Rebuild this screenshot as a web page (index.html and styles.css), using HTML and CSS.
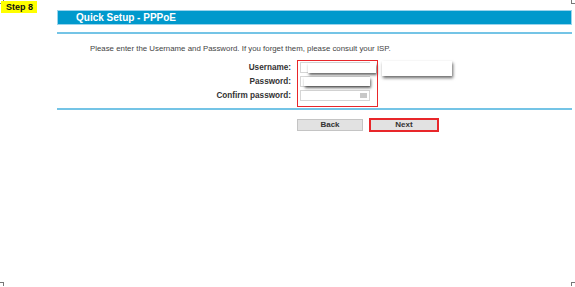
FILE: index.html
```html
<!DOCTYPE html>
<html>
<head>
<meta charset="utf-8">
<link rel="stylesheet" href="styles.css">
</head>
<body>
<div class="page">
  <span class="corner tl"></span>
  <span class="corner tr"></span>
  <span class="corner bl"></span>
  <span class="corner br"></span>
  <div class="step">Step 8</div>
  <div class="main">
    <div class="header">Quick Setup - PPPoE</div>
    <div class="rule"></div>
    <p class="intro">Please enter the Username and Password. If you forget them, please consult your ISP.</p>
    <div class="form">
      <div class="row">
        <label class="lbl">Username:</label>
        <div class="field"><span class="input"></span></div>
      </div>
      <div class="row">
        <label class="lbl">Password:</label>
        <div class="field"><span class="input"></span></div>
      </div>
      <div class="row">
        <label class="lbl">Confirm password:</label>
        <div class="field"><span class="input"><span class="key"></span></span></div>
      </div>
      <span class="mask m1"></span>
      <span class="mask m2"></span>
      <span class="mask m3"></span>
      <span class="highlight"></span>
    </div>
    <div class="rule rule2"></div>
    <div class="buttons">
      <button class="btn">Back</button>
      <button class="btn next">Next</button>
    </div>
  </div>
</div>
</body>
</html>
```
FILE: styles.css
```css
html, body {
  margin: 0;
  padding: 0;
  background: #fff;
}
.page {
  position: relative;
  width: 575px;
  height: 287px;
  overflow: hidden;
  font-family: "Liberation Sans", Arial, sans-serif;
  color: #333;
}
.corner {
  position: absolute;
  width: 3px;
  height: 3px;
  border-color: #777;
  border-style: solid;
  border-width: 0;
}
.corner.tl { left: 0; top: 0; border-right-width: 1px; border-bottom-width: 1px; }
.corner.tr { right: 0; top: 0; border-left-width: 1px; border-bottom-width: 1px; }
.corner.bl { left: 0; bottom: 1px; border-right-width: 1px; border-top-width: 1px; }
.corner.br { right: 0; bottom: 1px; border-left-width: 1px; border-top-width: 1px; }
.step {
  position: absolute;
  left: 1px;
  top: 1px;
  width: 36px;
  height: 12px;
  background: #ffff00;
  font-size: 9px;
  font-weight: bold;
  line-height: 12px;
  padding-left: 5px;
  box-sizing: border-box;
  color: #111;
}
.main {
  margin-left: 57px;
  padding-top: 10px;
  width: 515px;
}
.header {
  height: 13px;
  background: #0099cc;
  border: 1px solid #9ad4ec;
  color: #fff;
  font-weight: bold;
  font-size: 10px;
  line-height: 13px;
  padding-left: 18px;
}
.rule {
  margin-top: 7px;
  height: 2px;
  background: #74c4e6;
}
.intro {
  margin: 10px 0 0 33px;
  font-size: 7.85px;
  line-height: 10px;
  color: #444;
}
.form {
  position: relative;
  margin-top: 8px;
  display: flex;
  flex-direction: column;
  gap: 3px;
}
.row {
  display: flex;
  align-items: center;
  height: 11px;
}
.lbl {
  width: 234px;
  text-align: right;
  font-size: 8.2px;
  font-weight: bold;
  color: #333;
}
.field {
  display: flex;
  margin-left: 9px;
}
.input {
  position: relative;
  width: 70px;
  height: 11px;
  border: 1px solid #d6d6d6;
  background: #fff;
  box-sizing: border-box;
}
.key {
  position: absolute;
  right: 2px;
  top: 2px;
  width: 7px;
  height: 5px;
  background: #c8c8c8;
}
.mask {
  position: absolute;
  background: #fff;
  box-shadow: 1px 2px 3px rgba(0,0,0,0.6);
}
.m1 { left: 251px; top: 1px; width: 68px; height: 10px; }
.m2 { left: 325px; top: -1px; width: 70px; height: 15px; }
.m3 { left: 247px; top: 15px; width: 66px; height: 9px; }
.highlight {
  position: absolute;
  left: 240px;
  top: -2px;
  width: 81px;
  height: 47px;
  border: 1.5px solid #e8262a;
  box-sizing: border-box;
}
.rule2 {
  margin-top: 7px;
}
.buttons {
  display: flex;
  gap: 6px;
  margin: 9px 0 0 240px;
}
.btn {
  width: 66px;
  height: 12px;
  padding: 0;
  font-family: "Liberation Sans", Arial, sans-serif;
  font-size: 8px;
  font-weight: bold;
  color: #333;
  background: #e2e2e2;
  border: 1px solid #c4c4c4;
  line-height: 10px;
}
.next {
  width: 70px;
  height: 14px;
  border: 2px solid #e8262a;
  margin-top: -1px;
}
```
